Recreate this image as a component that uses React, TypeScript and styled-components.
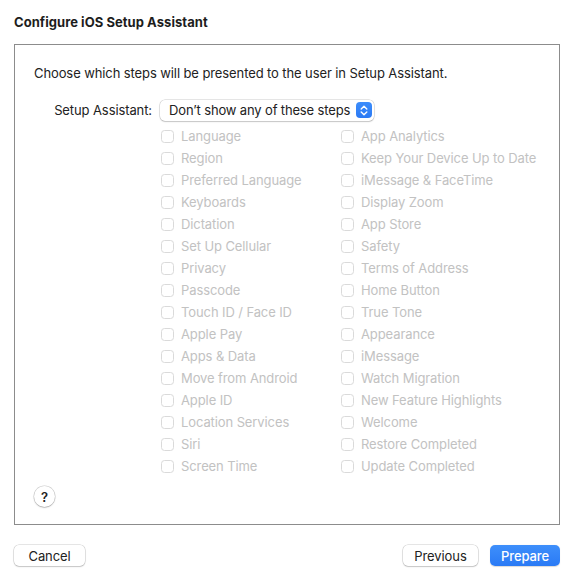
import React from "react";
import styled, { createGlobalStyle } from "styled-components";

const Global = createGlobalStyle`
  html, body { margin: 0; padding: 0; background: #ffffff; }
  body {
    font-family: Inter, "Liberation Sans", Arial, sans-serif;
    font-size: 13px;
    color: #222222;
    -webkit-font-smoothing: antialiased;
  }
`;

const Page = styled.div`
  width: 575px;
  height: 583px;
  box-sizing: border-box;
  padding: 14px 15px 0 14px;
  display: flex;
  flex-direction: column;
`;

const Title = styled.h1`
  margin: 0;
  font-size: 13px;
  line-height: 16px;
  font-weight: 700;
  color: #1d1d1d;
  letter-spacing: 0.05px;
`;

const Panel = styled.section`
  margin-top: 14px;
  border: 1px solid #8c8c8c;
  height: 481px;
  box-sizing: border-box;
  padding: 20px 19px 17px 19px;
  display: flex;
  flex-direction: column;
`;

const Intro = styled.p`
  margin: 0;
  line-height: 16px;
  color: #222;
  letter-spacing: -0.1px;
`;

const Form = styled.div`
  margin-top: 18px;
  display: grid;
  grid-template-columns: 118px auto;
  column-gap: 8px;
  align-items: center;
`;

const Label = styled.span`
  text-align: right;
  line-height: 22px;
  letter-spacing: -0.1px;
`;

const Popup = styled.div`
  justify-self: start;
  display: flex;
  align-items: center;
  gap: 6px;
  height: 21px;
  box-sizing: border-box;
  padding: 0 2px 0 9px;
  background: #fff;
  border-radius: 5px;
  box-shadow: 0 0 0 0.5px rgba(0, 0, 0, 0.2), 0 1px 1.5px rgba(0, 0, 0, 0.15);
  letter-spacing: -0.15px;
`;

const Stepper = styled.span`
  width: 16px;
  height: 16px;
  border-radius: 4px;
  background: linear-gradient(#3d8dfb, #2b7af4);
  display: flex;
  align-items: center;
  justify-content: center;
`;

const Steps = styled.div`
  grid-column: 2;
  margin-top: 4px;
  display: grid;
  grid-template-columns: 180px 180px;
  grid-template-rows: repeat(16, 22px);
  grid-auto-flow: column;
`;

const Step = styled.label`
  display: flex;
  align-items: center;
  gap: 7px;
  padding-left: 1px;
  color: #c2c2c2;
  letter-spacing: -0.1px;
  white-space: nowrap;
`;

const Box = styled.span`
  width: 13px;
  height: 13px;
  box-sizing: border-box;
  border: 1px solid #dadada;
  border-radius: 3.5px;
  background: #fff;
  flex: none;
`;

const Help = styled.button`
  margin-top: auto;
  width: 21px;
  height: 21px;
  padding: 0;
  border: none;
  border-radius: 50%;
  background: #fff;
  box-shadow: 0 0 0 0.5px rgba(0, 0, 0, 0.2), 0 1px 1.5px rgba(0, 0, 0, 0.18);
  font-family: inherit;
  font-size: 13px;
  font-weight: 600;
  color: #222;
  display: flex;
  align-items: center;
  justify-content: center;
`;

const Footer = styled.div`
  margin-top: 20px;
  display: flex;
  align-items: center;
  gap: 12px;
`;

const Spacer = styled.div`
  flex: 1;
`;

const Button = styled.button<{ $primary?: boolean; $w: number }>`
  width: ${(p) => p.$w}px;
  height: 21px;
  padding: 0;
  border: none;
  border-radius: 5px;
  font-family: inherit;
  font-size: 13px;
  letter-spacing: -0.1px;
  color: ${(p) => (p.$primary ? "#fff" : "#222")};
  font-weight: ${(p) => (p.$primary ? 500 : 400)};
  background: ${(p) => (p.$primary ? "linear-gradient(#3e8ffb, #2a7af5)" : "#fff")};
  box-shadow: ${(p) =>
    p.$primary
      ? "0 0.5px 1px rgba(0,0,0,0.15)"
      : "0 0 0 0.5px rgba(0,0,0,0.2), 0 1px 1.5px rgba(0,0,0,0.15)"};
`;

const left = [
  "Language",
  "Region",
  "Preferred Language",
  "Keyboards",
  "Dictation",
  "Set Up Cellular",
  "Privacy",
  "Passcode",
  "Touch ID / Face ID",
  "Apple Pay",
  "Apps & Data",
  "Move from Android",
  "Apple ID",
  "Location Services",
  "Siri",
  "Screen Time",
];
const right = [
  "App Analytics",
  "Keep Your Device Up to Date",
  "iMessage & FaceTime",
  "Display Zoom",
  "App Store",
  "Safety",
  "Terms of Address",
  "Home Button",
  "True Tone",
  "Appearance",
  "iMessage",
  "Watch Migration",
  "New Feature Highlights",
  "Welcome",
  "Restore Completed",
  "Update Completed",
];

export default function App() {
  return (
    <>
      <Global />
      <Page>
        <Title>Configure iOS Setup Assistant</Title>
        <Panel>
          <Intro>Choose which steps will be presented to the user in Setup Assistant.</Intro>
          <Form>
            <Label>Setup Assistant:</Label>
            <Popup>
              <span>Don’t show any of these steps</span>
              <Stepper>
                <svg width="8" height="11" viewBox="0 0 8 11" fill="none">
                  <path d="M1.2 4 L4 1.3 L6.8 4" stroke="#fff" strokeWidth="1.4" strokeLinecap="round" strokeLinejoin="round" />
                  <path d="M1.2 7 L4 9.7 L6.8 7" stroke="#fff" strokeWidth="1.4" strokeLinecap="round" strokeLinejoin="round" />
                </svg>
              </Stepper>
            </Popup>
            <Steps>
              {[...left, ...right].map((s) => (
                <Step key={s}>
                  <Box />
                  {s}
                </Step>
              ))}
            </Steps>
          </Form>
          <Help>?</Help>
        </Panel>
        <Footer>
          <Button $w={71}>Cancel</Button>
          <Spacer />
          <Button $w={75}>Previous</Button>
          <Button $w={70} $primary>
            Prepare
          </Button>
        </Footer>
      </Page>
    </>
  );
}
